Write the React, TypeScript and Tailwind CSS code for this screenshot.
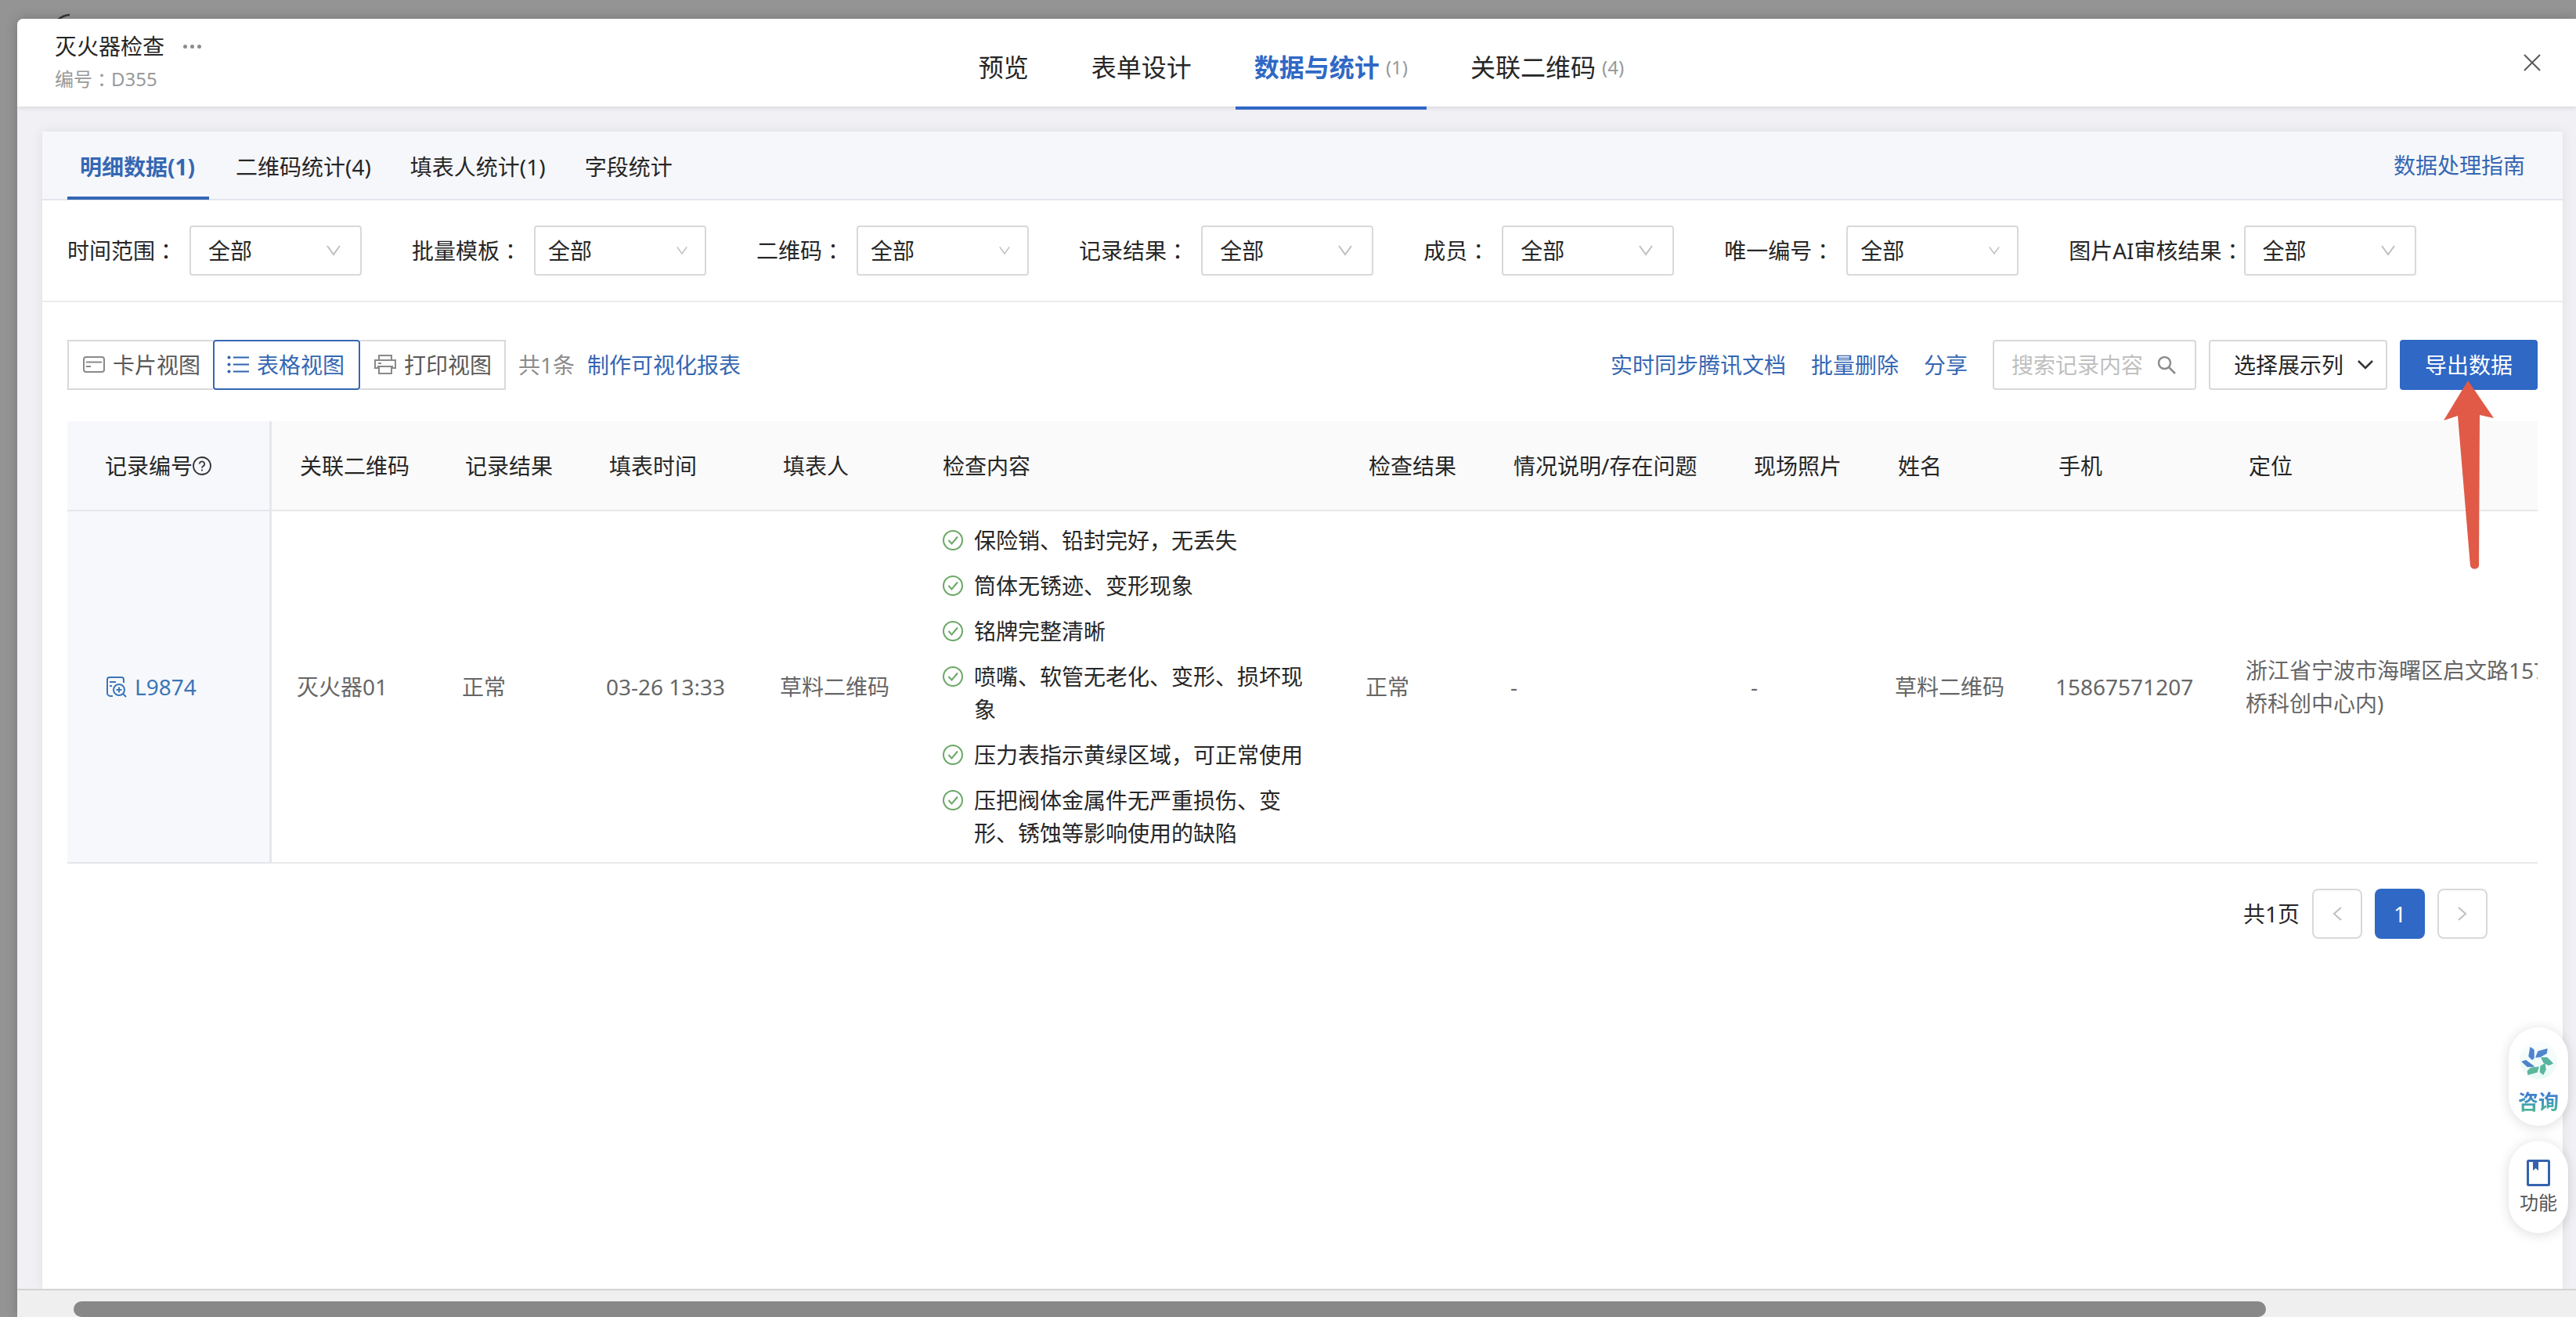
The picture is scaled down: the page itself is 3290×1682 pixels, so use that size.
import type { ReactNode } from 'react';

const YAHEI_LIKE = "font-['Noto_Sans','Noto_Sans_CJK_SC',sans-serif]";

function Chevron({ className }: { className: string }) {
  return (
    <svg viewBox="0 0 18 14" fill="none" stroke="currentColor" className={className} aria-hidden="true">
      <path d="M1 1l8 11 8-11" strokeWidth="2" />
    </svg>
  );
}

function CardIcon() {
  return (
    <svg viewBox="0 0 28 28" className="h-7 w-7 shrink-0" fill="none" stroke="#8a8a8a" strokeWidth="2" aria-hidden="true">
      <rect x="1" y="4" width="26" height="19" rx="3" />
      <path d="M4 10.500h20M4 16h6" />
    </svg>
  );
}

function ListIcon() {
  return (
    <svg viewBox="0 0 28 28" className="h-7 w-7 shrink-0" fill="none" stroke="#2f63b0" strokeWidth="2" aria-hidden="true">
      <path d="M8 4.500h20M8 13.500h20M8 22.500h20" />
      <g fill="#2f63b0" stroke="none">
        <circle cx="2.500" cy="4.500" r="2" />
        <circle cx="2.500" cy="13.500" r="2" />
        <circle cx="2.500" cy="22.500" r="2" />
      </g>
    </svg>
  );
}

function PrintIcon() {
  return (
    <svg viewBox="0 0 28 28" className="h-7 w-7 shrink-0" fill="none" stroke="#8a8a8a" strokeWidth="2" aria-hidden="true">
      <path d="M6 8V2h16v6M6 18H1V8h26v10h-5" />
      <path d="M4 16h20M6 16v9h16v-9M5 12h4" />
    </svg>
  );
}

function RecordIcon() {
  return (
    <svg viewBox="0 0 26 28" className="h-7 w-[26px] shrink-0" fill="none" stroke="#3a76b8" strokeWidth="2" aria-hidden="true">
      <path d="M8 26H5a4 4 0 0 1-4-4V5a3 3 0 0 1 3-3h15a3 3 0 0 1 3 3v4M4 8h8M4 13h3" />
      <circle cx="16" cy="18" r="7" />
      <path d="M16 14.500v7M12.500 18h7M21 23l4 4" />
    </svg>
  );
}

function HelpIcon() {
  return (
    <svg viewBox="0 0 24 24" className="h-6 w-6 shrink-0" fill="none" stroke="#333" strokeWidth="1.800" aria-hidden="true">
      <circle cx="12" cy="12" r="11" />
      <path d="M8.800 9.500a3.200 3.200 0 1 1 4.800 2.800c-1 .6-1.600 1.200-1.600 2.400M12 16.500v2" />
    </svg>
  );
}

function CheckCircle() {
  return (
    <svg viewBox="0 0 26 26" className="mt-2 h-[26px] w-[26px] shrink-0" fill="none" stroke="#6aa865" strokeWidth="2" aria-hidden="true">
      <circle cx="13" cy="13" r="12" />
      <path d="M7.500 13l4 4.500 7.500-9" />
    </svg>
  );
}

function Pinwheel() {
  return (
    <svg viewBox="0 0 48 48" className="h-12 w-12 shrink-0" aria-hidden="true">
      <defs>
        <linearGradient id="halo" x1="0" y1="0" x2="0" y2="1">
          <stop offset="0" stopColor="#fafdff" />
          <stop offset="1" stopColor="#eafaf5" />
        </linearGradient>
      </defs>
      <circle cx="24" cy="24" r="24" fill="url(#halo)" />
      <g strokeWidth="1.500" strokeLinejoin="round">
        <path d="M14 8L18 11V21L16 23L12 19Z" fill="#4f83d0" stroke="#4f83d0" />
        <path d="M35 10L34 15L26 19.500L21 20L24 13Z" fill="#4f86cc" stroke="#4f86cc" />
        <path d="M28 21H35L42 28L37 30L31 27Z" fill="#5ab3a0" stroke="#5ab3a0" />
        <path d="M32 29L33 36L30 42L26.500 39L27 32Z" fill="#5cb69c" stroke="#5cb69c" />
        <path d="M24 33L22 39L11 42L10.500 38L14 34.500Z" fill="#5cb69c" stroke="#5cb69c" />
        <path d="M3.500 26L8 24.500L18 32L10 32Z" fill="#4f83c8" stroke="#4f83c8" />
      </g>
    </svg>
  );
}

function BookIcon() {
  return (
    <svg viewBox="0 0 30 34" className="h-[34px] w-[30px]" aria-hidden="true">
      <rect x="1.500" y="1.500" width="27" height="31" rx="1" fill="none" stroke="#3563ae" strokeWidth="3" />
      <path d="M8 2h7v12l-3.500-3L8 14z" fill="#3563ae" />
    </svg>
  );
}

type Filter = { id: string; label: string; wide: boolean; tight?: boolean };

const filters: Filter[] = [
  { id: 'time', label: '时间范围', wide: true },
  { id: 'template', label: '批量模板', wide: false },
  { id: 'qrcode', label: '二维码', wide: false },
  { id: 'result', label: '记录结果', wide: true },
  { id: 'member', label: '成员', wide: true },
  { id: 'serial', label: '唯一编号', wide: false },
  { id: 'ai', label: '图片AI审核结果', wide: true, tight: true },
];

function FilterField({ id, label, wide, tight }: Filter) {
  return (
    <div className={tight ? 'flex items-center' : 'flex items-center gap-4'}>
      <label htmlFor={id} className="flex whitespace-nowrap">
        {label}
        <span className="font-['Noto_Sans_CJK_JP',sans-serif]">：</span>
      </label>
      <div className="relative">
        <select
          id={id}
          className={
            wide
              ? 'h-16 w-[220px] appearance-none rounded border-2 border-[#d9d9d9] bg-white pl-[22px]'
              : 'h-16 w-[220px] appearance-none rounded border-2 border-[#d9d9d9] bg-white pl-4'
          }
        >
          <option>全部</option>
        </select>
        <Chevron
          className={
            wide
              ? 'pointer-events-none absolute top-[25px] right-[27px] h-3.5 w-[18px] text-[#bfbfbf]'
              : 'pointer-events-none absolute top-[26px] right-6 h-3 w-3.5 text-[#bfbfbf]'
          }
        />
      </div>
    </div>
  );
}

const checks = [
  '保险销、铅封完好，无丢失',
  '筒体无锈迹、变形现象',
  '铭牌完整清晰',
  '喷嘴、软管无老化、变形、损坏现象',
  '压力表指示黄绿区域，可正常使用',
  '压把阀体金属件无严重损伤、变形、锈蚀等影响使用的缺陷',
];

function Th({ children }: { children: ReactNode }) {
  return <th className="border-b-2 border-[#e8e8e8] bg-[#fafafa] pl-9 text-left font-normal">{children}</th>;
}

function Td({ children }: { children: ReactNode }) {
  return <td className="border-b-2 border-[#e8e8e8] pl-8 text-[#666]">{children}</td>;
}

function SideTab({ children }: { children: ReactNode }) {
  return (
    <button className="flex h-[88px] items-center border-b-4 border-transparent px-4 pt-2">{children}</button>
  );
}

function Header() {
  return (
    <header className="relative z-10 grid h-28 grid-cols-[1fr_auto_1fr] bg-white pr-9 pl-12 shadow-[0_2px_6px_rgba(0,0,0,0.10)]">
      <div className="flex flex-col pt-3.5">
        <div className="flex items-center gap-6">
          <h1 className="leading-[42px]">灭火器检查</h1>
          <button aria-label="更多" className="flex gap-1">
            <span className="h-[5px] w-[5px] rounded-full bg-[#8c8c8c]" />
            <span className="h-[5px] w-[5px] rounded-full bg-[#8c8c8c]" />
            <span className="h-[5px] w-[5px] rounded-full bg-[#8c8c8c]" />
          </button>
        </div>
        <p className="flex text-2xl leading-[42px] text-[#999]">
          编号<span className="font-['Noto_Sans_CJK_JP',sans-serif]">：</span>D355
        </p>
      </div>
      <nav className="-mb-1 flex gap-8 text-[32px]">
        <button className="px-6 pt-2">预览</button>
        <button className="px-6 pt-2">表单设计</button>
        <button className="flex items-center gap-2 border-b-4 border-[#2f68c5] px-6 pt-3 font-bold text-[#2f68c5]">
          数据与统计<span className="text-2xl font-normal text-[#999]">(1)</span>
        </button>
        <button className="flex items-center gap-2 px-6 pt-2">
          关联二维码<span className="text-2xl text-[#999]">(4)</span>
        </button>
      </nav>
      <button aria-label="关闭" className="mt-[42px] mr-1.5 flex h-7 w-7 items-center justify-center self-start justify-self-end">
        <svg viewBox="0 0 22 22" className="h-[22px] w-[22px]" stroke="#595959" strokeWidth="2" aria-hidden="true">
          <path d="M1 1l20 20M21 1L1 21" />
        </svg>
      </button>
    </header>
  );
}

function Toolbar() {
  const link = 'text-[#3567b3]';
  return (
    <div className="flex items-center px-8 pt-12">
      <div className="flex h-16 text-[#595959]">
        <button className="flex w-[186px] items-center gap-2.5 border-2 border-r-0 border-[#d9d9d9] pl-[18px]">
          <CardIcon />卡片视图
        </button>
        <button className="flex w-[188px] items-center gap-2.5 rounded border-2 border-[#3567b3] pl-4 text-[#3567b3]">
          <ListIcon />表格视图
        </button>
        <button className="flex w-[186px] items-center gap-2.5 border-2 border-l-0 border-[#d9d9d9] pl-[18px]">
          <PrintIcon />打印视图
        </button>
      </div>
      <span className="ml-4 text-[#8c8c8c]">共1条</span>
      <a href="#report" className={`ml-4 ${link}`}>制作可视化报表</a>
      <div className="ml-auto flex items-center gap-8">
        <a href="#sync" className={link}>实时同步腾讯文档</a>
        <a href="#delete" className={link}>批量删除</a>
        <a href="#share" className={link}>分享</a>
        <div className="flex gap-4">
          <div className="flex h-16 w-[260px] items-center rounded border-2 border-[#d9d9d9] pr-6 pl-[22px]">
            <input
              aria-label="搜索记录内容"
              placeholder="搜索记录内容"
              className="w-0 flex-1 outline-none placeholder:text-[#bfbfbf]"
            />
            <svg viewBox="0 0 24 24" className="h-6 w-6" fill="none" stroke="#8c8c8c" strokeWidth="2.500" aria-hidden="true">
              <circle cx="9.500" cy="9.500" r="7.500" />
              <path d="M15 15l8 8" />
            </svg>
          </div>
          <button className="flex h-16 w-[228px] items-center gap-4 rounded border-2 border-[#d9d9d9] pl-[30px]">
            选择展示列
            <svg viewBox="0 0 24 16" className="h-4 w-6" fill="none" stroke="#333" strokeWidth="2.500" aria-hidden="true">
              <path d="M3 3l9 9 9-9" />
            </svg>
          </button>
          <div className="relative">
            <button className="h-16 rounded bg-[#2f68c5] px-8 text-white">导出数据</button>
            <svg
              viewBox="0 0 64 246"
              className="pointer-events-none absolute top-[51px] left-14 z-10 h-[246px] w-16"
              fill="#e05a47"
              aria-hidden="true"
            >
              <path d="M31 1L64 49 46 45 45 238a6 6 0 0 1-11 0L18 46 0 52z" />
            </svg>
          </div>
        </div>
      </div>
    </div>
  );
}

function RecordsTable() {
  return (
    <div className="mx-8 mt-10 overflow-hidden">
      <table className="w-[3400px] table-fixed border-separate border-spacing-0">
        <colgroup>
          <col className="w-[261px]" />
          <col className="w-[211px]" />
          <col className="w-[184px]" />
          <col className="w-[222px]" />
          <col className="w-[204px]" />
          <col className="w-[544px]" />
          <col className="w-[185px]" />
          <col className="w-[307px]" />
          <col className="w-[184px]" />
          <col className="w-[205px]" />
          <col className="w-[243px]" />
          <col />
        </colgroup>
        <thead>
          <tr className="h-[115px]">
            <th className="border-r-3 border-b-2 border-[#e6e7ec] bg-[#f7f8fb] pl-12 text-left font-normal">
              <span className="flex items-center">
                记录编号
                <HelpIcon />
              </span>
            </th>
            <Th>关联二维码</Th>
            <Th>记录结果</Th>
            <Th>填表时间</Th>
            <Th>填表人</Th>
            <Th>检查内容</Th>
            <Th>检查结果</Th>
            <Th>情况说明/存在问题</Th>
            <Th>现场照片</Th>
            <Th>姓名</Th>
            <Th>手机</Th>
            <Th>定位</Th>
          </tr>
        </thead>
        <tbody>
          <tr>
            <td className="border-r-3 border-b-2 border-[#e6e7ec] bg-[#f7f8fb] pl-[50px]">
              <a href="#L9874" className="flex items-center gap-2.5 text-[#3a76b8]">
                <RecordIcon />
                L9874
              </a>
            </td>
            <Td>灭火器01</Td>
            <Td>正常</Td>
            <Td>03-26 13:33</Td>
            <Td>草料二维码</Td>
            <td className="border-b-2 border-[#e8e8e8] py-4 pr-8 pl-9">
              <ul className="flex flex-col gap-4">
                {checks.map((item) => (
                  <li key={item} className="flex gap-3.5">
                    <CheckCircle />
                    <span>{item}</span>
                  </li>
                ))}
              </ul>
            </td>
            <Td>正常</Td>
            <Td>-</Td>
            <Td>-</Td>
            <Td>草料二维码</Td>
            <Td>15867571207</Td>
            <Td>
              <span className="whitespace-nowrap">
                浙江省宁波市海曙区启文路157
                <br />
                桥科创中心内)
              </span>
            </Td>
          </tr>
        </tbody>
      </table>
    </div>
  );
}

function Pager() {
  return (
    <div className="mt-8 mr-24 flex items-center justify-end gap-4">
      <span>共1页</span>
      <button aria-label="上一页" className="flex h-16 w-16 items-center justify-center rounded-lg border-2 border-[#d9d9d9] text-[#bfbfbf]">
        <svg viewBox="0 0 12 18" className="h-[18px] w-3" fill="none" stroke="currentColor" strokeWidth="2" aria-hidden="true">
          <path d="M11 1L2 9l9 8" />
        </svg>
      </button>
      <button className="h-16 w-16 rounded-lg bg-[#2f68c5] text-white">1</button>
      <button aria-label="下一页" className="flex h-16 w-16 items-center justify-center rounded-lg border-2 border-[#d9d9d9] text-[#bfbfbf]">
        <svg viewBox="0 0 12 18" className="h-[18px] w-3" fill="none" stroke="currentColor" strokeWidth="2" aria-hidden="true">
          <path d="M1 1l9 8-9 8" />
        </svg>
      </button>
    </div>
  );
}

export default function App() {
  return (
    <div className={`relative flex h-screen flex-col overflow-hidden bg-[#949494] pt-6 pl-[22px] text-[28px] leading-[42px] text-[#262626] ${YAHEI_LIKE}`}>
      <svg viewBox="0 0 18 8" className="absolute top-[17px] left-[73px] h-2 w-[18px]" fill="none" stroke="#333" strokeWidth="2.500" aria-hidden="true">
        <path d="M1 8C5 5 9 2 16 2" />
      </svg>
      <div className="relative flex min-h-0 flex-1 flex-col overflow-hidden rounded-tl-lg bg-[#f0f0f5] shadow-[0_0_16px_rgba(0,0,0,0.2)]">
        <Header />
        <main className="mt-8 mr-[17px] ml-8 flex-1 bg-white shadow-[0_0_14px_rgba(0,0,0,0.08)]">
          <div className="flex h-[88px] items-center justify-between border-b-2 border-[#e4e6ee] bg-[#f6f7fb] px-8">
            <nav className="flex gap-[18px]">
              <button className="flex h-[88px] items-center border-b-4 border-[#3567b3] pt-2 pr-[18px] pl-4 font-bold text-[#3567b3]">
                明细数据(1)
              </button>
              <SideTab>二维码统计(4)</SideTab>
              <SideTab>填表人统计(1)</SideTab>
              <SideTab>字段统计</SideTab>
            </nav>
            <a href="#guide" className="mr-4 text-[#3567b3]">数据处理指南</a>
          </div>
          <div className="flex gap-16 border-b-2 border-[#ebebeb] px-8 py-8">
            {filters.map((f) => (
              <FilterField key={f.id} {...f} />
            ))}
          </div>
          <Toolbar />
          <RecordsTable />
          <Pager />
        </main>
        <div className="h-9 border-t-2 border-[#d3d3d3] bg-[#efefef] pt-3.5 pl-[72px]">
          <div className="h-5 w-[87.6%] rounded-full bg-[#888]" />
        </div>
      </div>
      <aside className="absolute right-2.5 bottom-[107px] flex w-[76px] flex-col gap-[19px]">
        <button className="flex h-[126px] flex-col items-center gap-2 rounded-full bg-white pt-[18px] shadow-[0_2px_16px_rgba(0,0,0,0.14)]">
          <Pinwheel />
          <span className="bg-linear-to-b from-[#3f7fd0] from-30% to-[#4fb995] to-80% bg-clip-text text-[26px] font-bold text-transparent">
            咨询
          </span>
        </button>
        <button className="flex h-[118px] flex-col items-center rounded-full bg-white pt-6 text-2xl text-[#555] shadow-[0_2px_16px_rgba(0,0,0,0.14)]">
          <BookIcon />
          <span className="leading-[42px]">功能</span>
        </button>
      </aside>
    </div>
  );
}
